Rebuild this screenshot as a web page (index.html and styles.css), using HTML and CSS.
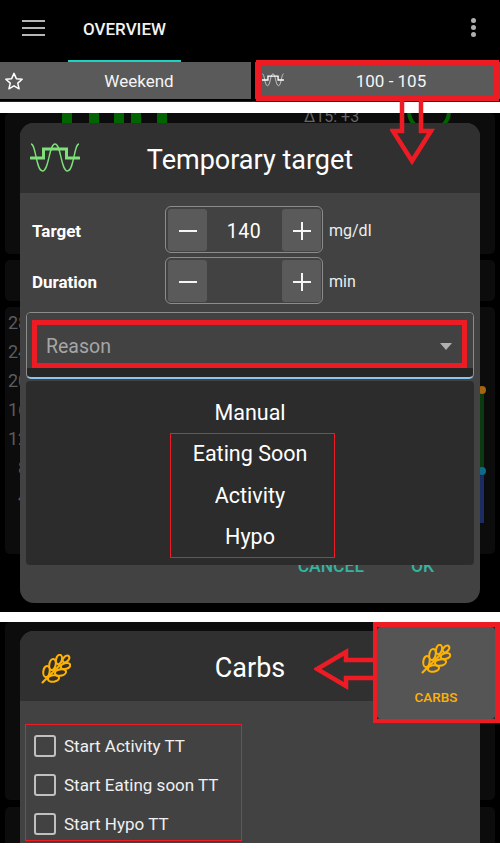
FILE: index.html
```html
<!DOCTYPE html>
<html lang="en">
<head>
    <meta charset="UTF-8">
    <title>Temporary target and carbs</title>
    <link rel="stylesheet" href="styles.css">
</head>
<body>
    <svg class="defs" width="0" height="0">
        <symbol id="wheat" viewBox="0 0 30 30">
            <g fill="none" stroke="currentColor" stroke-width="2.100" stroke-linecap="round">
                <path d="M1.500 28.500 L19 11"/>
                <ellipse cx="5.500" cy="17.500" rx="3.200" ry="5.600" transform="rotate(8 5.500 17.500)"/>
                <ellipse cx="12.500" cy="24.500" rx="3.200" ry="5.600" transform="rotate(82 12.500 24.500)"/>
                <ellipse cx="11.500" cy="10.500" rx="3.200" ry="5.600" transform="rotate(10 11.500 10.500)"/>
                <ellipse cx="19.500" cy="18.500" rx="3.200" ry="5.600" transform="rotate(80 19.500 18.500)"/>
                <ellipse cx="18" cy="5.500" rx="2.900" ry="4.800" transform="rotate(14 18 5.500)"/>
                <ellipse cx="24.500" cy="12" rx="2.900" ry="4.800" transform="rotate(76 24.500 12)"/>
                <ellipse cx="25" cy="5" rx="2.600" ry="4" transform="rotate(45 25 5)"/>
            </g>
        </symbol>
        <symbol id="tt" viewBox="0 0 50 30">
            <path d="M1 1 C6 1 6 28 12.500 28 C19 28 19 1 25 1 C31 1 31 28 37.500 28 C44 28 44 1 49 1" fill="none" stroke="currentColor" stroke-width="1.400"/>
            <path d="M1 15 H13.500 V6 H36.500 V15 H49" fill="none" stroke="currentColor" stroke-width="3" stroke-linecap="round"/>
        </symbol>
    </svg>

    <!-- Barra superior -->
    <section class="panel panel-top">
        <header class="topbar">
            <div class="burger"><span></span><span></span><span></span></div>
            <div class="tab-active">OVERVIEW</div>
            <div class="kebab"><span></span><span></span><span></span></div>
        </header>
        <div class="quick-row">
            <div class="quick-btn quick-profile">
                <svg class="quick-icon" width="20" height="20" viewBox="0 0 24 24"><path d="M12 2.800 L14.800 9.200 L21.800 9.900 L16.500 14.500 L18.100 21.400 L12 17.800 L5.900 21.400 L7.500 14.500 L2.200 9.900 L9.200 9.200 Z" fill="none" stroke="#fff" stroke-width="1.800" stroke-linejoin="round"/></svg>
                <span>Weekend</span>
            </div>
            <div class="quick-btn quick-target">
                <svg class="quick-icon" width="22" height="18"><use href="#tt"/></svg>
                <span>100 - 105</span>
            </div>
        </div>
        <div class="red-box red-tab"></div>
    </section>

    <!-- Dialogo objetivo temporal -->
    <section class="panel panel-mid">
        <div class="backdrop">
            <div class="bg-card bg-card-a"></div>
            <div class="bg-card bg-card-b"></div>
            <div class="bg-card bg-card-c">
                <span>28</span><span>24</span><span>20</span><span>16</span><span>12</span><span>8</span><span>4</span>
            </div>
            <div class="bg-strip bg-strip-a"></div>
            <div class="bg-strip bg-strip-b"></div>
            <div class="bg-dot bg-dot-a"></div>
            <div class="bg-dot bg-dot-b"></div>
            <div class="bg-bars"><i></i><i></i><i></i><i></i><i></i></div>
            <div class="bg-delta">Δ15: +3</div>
            <div class="bg-ring"></div>
        </div>

        <div class="dialog dialog-tt">
            <div class="dialog-head">
                <svg class="tt-icon" width="50" height="30"><use href="#tt"/></svg>
                <h2>Temporary target</h2>
            </div>
            <div class="dialog-body">
                <div class="field-row">
                    <label>Target</label>
                    <div class="stepper">
                        <div class="step-btn"><i class="minus"></i></div>
                        <div class="step-value">140</div>
                        <div class="step-btn"><i class="minus"></i><i class="plus"></i></div>
                    </div>
                    <span class="unit">mg/dl</span>
                </div>
                <div class="field-row">
                    <label>Duration</label>
                    <div class="stepper">
                        <div class="step-btn"><i class="minus"></i></div>
                        <div class="step-value"></div>
                        <div class="step-btn"><i class="minus"></i><i class="plus"></i></div>
                    </div>
                    <span class="unit">min</span>
                </div>
                <div class="reason">
                    <div class="reason-value">
                        <span>Reason</span>
                        <i class="caret"></i>
                    </div>
                </div>
                <div class="actions">
                    <span>CANCEL</span>
                    <span>OK</span>
                </div>
            </div>
            <div class="popup">
                <div class="popup-item">Manual</div>
                <div class="popup-item">Eating Soon</div>
                <div class="popup-item">Activity</div>
                <div class="popup-item">Hypo</div>
            </div>
        </div>

        <div class="red-box red-reason"></div>
        <div class="red-thin red-items"></div>
    </section>

    <!-- Dialogo carbohidratos -->
    <section class="panel panel-bottom">
        <div class="backdrop">
            <div class="bg-card bg-card-d"></div>
            <div class="bg-card bg-card-e"></div>
        </div>

        <div class="dialog dialog-carbs">
            <div class="dialog-head">
                <svg class="wheat-icon" width="30" height="30"><use href="#wheat"/></svg>
                <h2>Carbs</h2>
            </div>
            <div class="dialog-body">
                <div class="check-row"><i class="check"></i>Start Activity TT</div>
                <div class="check-row"><i class="check"></i>Start Eating soon TT</div>
                <div class="check-row"><i class="check"></i>Start Hypo TT</div>
            </div>
        </div>

        <div class="red-thin red-checks"></div>
        <div class="carbs-btn">
            <div class="carbs-inner">
                <svg width="30" height="30"><use href="#wheat"/></svg>
                <span>CARBS</span>
            </div>
        </div>
        <svg class="arrow arrow-left" width="60" height="42" viewBox="0 0 60 42"><path d="M60 12 H32 V4 L3 21 L32 38 V30 H60" fill="none" stroke="#ed1c24" stroke-width="4.500"/></svg>
    </section>

    <svg class="arrow arrow-down" width="50" height="70" viewBox="0 0 50 70"><path d="M12 0 V31 H3 L22 61 L41 31 H31 V0" fill="none" stroke="#ed1c24" stroke-width="4.500"/></svg>
</body>
</html>
```

FILE: styles.css
```css
* {
    box-sizing: border-box;
}
body {
    position: relative;
    margin: 0;
    width: 500px;
    height: 853px;
    background: #fff;
    font-family: Roboto, "Liberation Sans", sans-serif;
    color: #fff;
    overflow: hidden;
}
.defs {
    position: absolute;
}
h2 {
    margin: 0;
    font-weight: 400;
}

.panel {
    position: relative;
    background: #000;
    overflow: hidden;
}
.panel-top {
    height: 102px;
    border-bottom: 1px solid #222;
}
.panel-mid {
    height: 499px;
    margin-top: 11px;
    padding-top: 10px;
}
.panel-bottom {
    height: 221px;
    margin-top: 10px;
    padding-top: 9px;
}

/* barra superior */
.topbar {
    height: 62px;
    display: flex;
    align-items: flex-start;
}
.burger {
    display: flex;
    flex-direction: column;
    gap: 5px;
    width: 23px;
    margin: 20px 0 0 22px;
}
.burger span {
    height: 2px;
    background: #b5b5b5;
}
.tab-active {
    width: 113px;
    height: 62px;
    margin-left: 23px;
    padding-top: 19px;
    text-align: center;
    font-size: 17px;
    line-height: 20px;
    font-weight: 500;
    color: #f2f2f2;
    border-bottom: 2px solid #19d3c5;
}
.kebab {
    display: flex;
    flex-direction: column;
    gap: 2px;
    margin: 18px 0 0 auto;
    padding-right: 24px;
}
.kebab span {
    width: 5px;
    height: 5px;
    border-radius: 50%;
    background: #b0b0b0;
}
.quick-row {
    display: flex;
    gap: 4px;
    height: 37px;
}
.quick-btn {
    position: relative;
    display: flex;
    align-items: center;
    justify-content: center;
    background: #5a5a5a;
    font-size: 17px;
    color: #f5f5f5;
}
.quick-profile {
    width: 251px;
    padding-left: 27px;
}
.quick-target {
    width: 245px;
    padding-left: 27px;
}
.quick-icon {
    position: absolute;
    left: 4px;
    top: 9px;
    color: #fff;
}
.quick-target .quick-icon {
    left: 7px;
}

/* fondo detras de los dialogos */
.backdrop {
    position: absolute;
    inset: 0;
}
.bg-card {
    position: absolute;
    left: 5px;
    width: 490px;
    background: #0c0c0c;
    border-radius: 5px;
}
.bg-card-a {
    top: 0;
    height: 141px;
}
.bg-card-b {
    top: 147px;
    height: 41px;
}
.bg-card-c {
    top: 194px;
    height: 247px;
    display: flex;
    flex-direction: column;
    gap: 8px;
    width: 490px;
    padding: 5px 0 0 3px;
    font-size: 18px;
    line-height: 21px;
    color: #5c5c5c;
}
.bg-card-c span {
    width: 20px;
    text-align: right;
}
.bg-card-d {
    top: 0;
    height: 178px;
}
.bg-card-e {
    top: 185px;
    height: 40px;
}
.bg-strip {
    position: absolute;
    left: 480px;
    width: 4px;
}
.bg-strip-a {
    top: 277px;
    height: 86px;
    background: #0b3a10;
}
.bg-strip-b {
    top: 363px;
    height: 47px;
    background: #1b2c63;
}
.bg-dot {
    position: absolute;
    left: 478px;
    width: 8px;
    height: 8px;
    border-radius: 50%;
}
.bg-dot-a {
    top: 273px;
    background: #a5640f;
}
.bg-dot-b {
    top: 354px;
    background: #0f6a8a;
}
.bg-bars {
    position: absolute;
    left: 62px;
    top: 0;
    width: 105px;
    height: 10px;
    display: flex;
}
.bg-bars i {
    width: 10px;
    background: #006400;
}
.bg-bars i:nth-child(2) {
    margin-left: 17px;
}
.bg-bars i:nth-child(3) {
    margin-left: 15px;
}
.bg-bars i:nth-child(4) {
    margin-left: 7px;
}
.bg-bars i:nth-child(5) {
    margin-left: 16px;
}
.bg-delta {
    position: absolute;
    left: 304px;
    top: -6px;
    font-size: 16px;
    line-height: 20px;
    color: #666;
}
.bg-ring {
    position: absolute;
    left: 407px;
    top: -24px;
    width: 44px;
    height: 44px;
    border: 4px solid #006400;
    border-radius: 50%;
    clip-path: inset(24px -2px 0 -2px);
}

/* dialogos */
.dialog {
    position: relative;
    width: 460px;
    margin-left: 20px;
    background: #424242;
    border-radius: 14px;
}
.dialog-tt {
    height: 480px;
}
.dialog-carbs {
    height: 240px;
}
.dialog-head {
    position: relative;
    height: 70px;
    padding-top: 4px;
    display: flex;
    align-items: center;
    justify-content: center;
    background: #303030;
    border-radius: 14px 14px 0 0;
}
.dialog-head h2 {
    font-size: 27px;
}
.tt-icon {
    position: absolute;
    left: 10px;
    top: 20px;
    color: #7fe07a;
}
.wheat-icon {
    position: absolute;
    left: 21px;
    top: 23px;
    color: #ffb300;
}
.dialog-tt .dialog-body {
    padding: 13px 6px 0;
}
.field-row {
    display: flex;
    align-items: center;
    height: 47px;
    margin-bottom: 4px;
    padding-left: 6px;
}
.field-row label {
    width: 133px;
    padding-top: 2px;
    font-size: 17px;
    font-weight: 700;
}
.stepper {
    display: flex;
    justify-content: space-between;
    width: 158px;
    height: 47px;
    padding: 1.500px;
    border: 1.500px solid #8c8c8c;
    border-radius: 6px;
}
.step-btn {
    position: relative;
    width: 39px;
    background: #5a5a5a;
    border-radius: 3px;
}
.step-btn .minus,
.step-btn .plus {
    position: absolute;
    left: 11px;
    top: 21px;
    width: 18px;
    height: 2.500px;
    background: #f5f5f5;
}
.step-btn .plus {
    left: 19px;
    top: 13px;
    width: 2.500px;
    height: 18px;
}
.step-value {
    flex: 1;
    padding-top: 2px;
    text-align: center;
    font-size: 19.500px;
    line-height: 41px;
    letter-spacing: 0.5px;
}
.unit {
    margin-left: 6px;
    padding-top: 2px;
    font-size: 16px;
    color: #eee;
}
.reason {
    height: 67px;
    margin-top: 8px;
    background: #262626;
    border: 1px solid #8c8c8c;
    border-bottom: 2px solid #8ac6f0;
    border-radius: 5px;
    overflow: hidden;
}
.reason-value {
    display: flex;
    align-items: center;
    justify-content: space-between;
    height: 55px;
    padding: 11px 21px 0 19px;
    background: #424242;
    font-size: 19.500px;
    color: #a6a6a6;
}
.caret {
    width: 0;
    height: 0;
    border: 6px solid transparent;
    border-top: 7px solid #b0b0b0;
    border-bottom: 0;
}
.actions {
    display: flex;
    gap: 47px;
    justify-content: flex-end;
    margin-top: 177px;
    padding-right: 40px;
    font-size: 17.500px;
    font-weight: 500;
    line-height: 20px;
    color: #35b3a0;
}
.popup {
    position: absolute;
    left: 6px;
    top: 258px;
    width: 448px;
    height: 184px;
    padding-top: 11px;
    background: #2c2c2c;
    border-radius: 4px;
}
.popup-item {
    height: 41.300px;
    text-align: center;
    font-size: 21.500px;
    line-height: 41.300px;
}

/* casillas */
.dialog-carbs .dialog-body {
    padding: 25px 0 0 14px;
}
.check-row {
    display: flex;
    align-items: center;
    gap: 8px;
    height: 39px;
    font-size: 17px;
    color: #f0f0f0;
}
.check {
    width: 22px;
    height: 22px;
    border: 2px solid #c0c0c0;
    border-radius: 3px;
}

/* anotaciones rojas */
.red-box {
    position: absolute;
    border: 5px solid #ed1c24;
}
.red-thin {
    position: absolute;
    border: 1px solid #ed1c24;
}
.red-tab {
    left: 256px;
    top: 60px;
    width: 243px;
    height: 41px;
}
.red-reason {
    left: 32px;
    top: 207px;
    width: 435px;
    height: 48px;
}
.red-items {
    left: 170px;
    top: 320px;
    width: 165px;
    height: 125px;
}
.red-checks {
    left: 25px;
    top: 102px;
    width: 217px;
    height: 117px;
}
.arrow {
    position: absolute;
}
.arrow-down {
    left: 390px;
    top: 100px;
}
.arrow-left {
    left: 314px;
    top: 26px;
}
.carbs-btn {
    position: absolute;
    left: 373px;
    top: 0;
    width: 127px;
    height: 101px;
    border: 5px solid #ed1c24;
    border-left-width: 4px;
    border-bottom-width: 4px;
    background: #2a2a2a;
}
.carbs-inner {
    display: flex;
    flex-direction: column;
    align-items: center;
    height: 100%;
    padding-top: 17px;
    background: #555;
    border-radius: 4px;
    color: #ffb300;
    font-size: 13.500px;
    font-weight: 500;
}
.carbs-inner span {
    margin-top: 15px;
}
```
